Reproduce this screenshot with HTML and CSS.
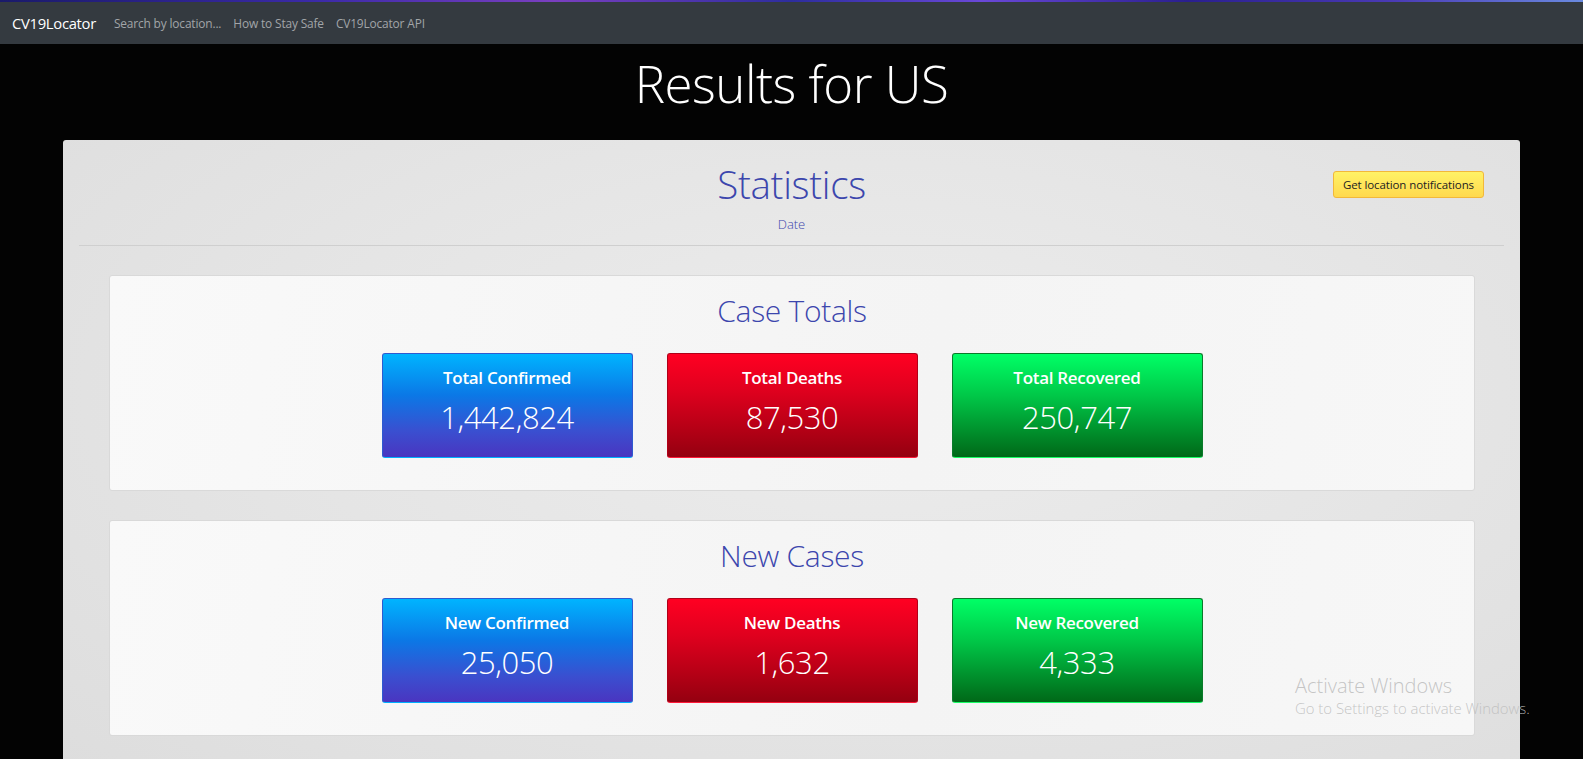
FILE: index.html
```html
<!DOCTYPE html>
<html lang="en">
<head>
<meta charset="utf-8">
<title>CV19Locator - Results for US</title>
<link rel="stylesheet" href="styles.css">
</head>
<body>
<div class="top-strip"></div>
<nav class="navbar">
  <a class="brand" href="#">CV19Locator</a>
  <a class="nav-link" href="#">Search by location...</a>
  <a class="nav-link" href="#">How to Stay Safe</a>
  <a class="nav-link" href="#">CV19Locator API</a>
</nav>
<h1 class="page-title">Results for US</h1>
<main class="stats-card">
  <header class="stats-header">
    <div></div>
    <div class="stats-heading">
      <h2 class="stats-title">Statistics</h2>
      <div class="stats-date">Date</div>
    </div>
    <div class="btn-wrap"><button class="btn-notify">Get location notifications</button></div>
  </header>
  <hr class="divider">
  <div class="stats-body">
    <section class="group">
      <h3 class="group-title">Case Totals</h3>
      <div class="tiles">
        <div class="tile tile-blue"><div class="tile-label">Total Confirmed</div><div class="tile-value">1,442,824</div></div>
        <div class="tile tile-red"><div class="tile-label">Total Deaths</div><div class="tile-value">87,530</div></div>
        <div class="tile tile-green"><div class="tile-label">Total Recovered</div><div class="tile-value">250,747</div></div>
      </div>
    </section>
    <section class="group">
      <h3 class="group-title">New Cases</h3>
      <div class="tiles">
        <div class="tile tile-blue"><div class="tile-label">New Confirmed</div><div class="tile-value">25,050</div></div>
        <div class="tile tile-red"><div class="tile-label">New Deaths</div><div class="tile-value">1,632</div></div>
        <div class="tile tile-green"><div class="tile-label">New Recovered</div><div class="tile-value">4,333</div></div>
      </div>
    </section>
  </div>
</main>
<div class="watermark">
  <div class="wm-title">Activate Windows</div>
  <div class="wm-sub">Go to Settings to activate Windows.</div>
</div>
</body>
</html>
```
FILE: styles.css
```css
html, body {
  margin: 0;
  padding: 0;
}
body {
  background: #030303;
  font-family: "Open Sans", "Noto Sans", sans-serif;
  color: #fff;
}
.top-strip {
  height: 2px;
  background: linear-gradient(90deg, #1a1a6a 0%, #3b2aa8 20%, #7a3fc0 35%, #2d2d9e 50%, #6a48d8 62%, #2a1f8f 75%, #4a3ab5 88%, #6a8ae0 100%);
}
.navbar {
  height: 42px;
  background: #343a40;
  display: flex;
  align-items: center;
  padding: 0 12px;
  gap: 12px;
}
.brand {
  color: #fff;
  text-decoration: none;
  font-size: 14.8px;
  margin-right: 6px;
  letter-spacing: -0.3px;
}
.nav-link {
  color: #a2a5a8;
  text-decoration: none;
  font-size: 11.9px;
  letter-spacing: -0.15px;
}
.page-title {
  margin: 8px 0 25px;
  text-align: center;
  font-weight: 300;
  font-size: 51px;
  line-height: 63px;
  letter-spacing: -0.5px;
  color: #fff;
}
.stats-card {
  margin: 0 63px;
  background: radial-gradient(ellipse at 55% 40%, #ececec 0%, #e5e5e5 50%, #dddddd 100%);
  border-radius: 3px 3px 0 0;
  padding-bottom: 40px;
}
.stats-header {
  display: grid;
  grid-template-columns: 1fr auto 1fr;
  padding: 21px 36px 0;
}
.stats-heading {
  text-align: center;
}
.stats-title {
  margin: 0;
  font-weight: 300;
  font-size: 38.5px;
  line-height: 46px;
  color: #3c46ad;
  letter-spacing: -0.3px;
}
.stats-date {
  margin-top: 7px;
  font-size: 13px;
  line-height: 20px;
  font-weight: 300;
  color: #3c46ad;
}
.btn-wrap {
  justify-self: end;
  padding-top: 10px;
}
.btn-notify {
  font-family: "Open Sans", "Noto Sans", sans-serif;
  font-size: 11.5px;
  color: #222;
  background: linear-gradient(180deg, #fff266 0%, #ffd94e 100%);
  border: 1px solid #f2b83a;
  border-radius: 3px;
  height: 27px;
  padding: 0 9px;
  letter-spacing: -0.1px;
}
.divider {
  margin: 11px 16px 0;
  border: 0;
  border-top: 1px solid #cfcfcf;
}
.stats-body {
  padding: 29px 45px 0 46px;
  display: flex;
  flex-direction: column;
  gap: 29px;
}
.group {
  background: linear-gradient(100deg, #f9f9f9 0%, #f4f4f4 60%, #f7f7f7 100%);
  border: 1px solid #d9d9d9;
  border-radius: 3px;
  padding: 16px 0 32px;
}
.group-title {
  margin: 0 0 23px;
  text-align: center;
  font-weight: 300;
  font-size: 30px;
  line-height: 38px;
  color: #3c46ad;
  letter-spacing: -0.3px;
}
.tiles {
  display: flex;
  justify-content: center;
  gap: 34px;
}
.tile {
  width: 251px;
  height: 105px;
  box-sizing: border-box;
  border-radius: 3px;
  display: flex;
  flex-direction: column;
  align-items: center;
  padding-top: 12px;
  color: #fff;
}
.tile-blue {
  background: linear-gradient(180deg, #00b4ff 0%, #0b78e6 40%, #3a4fd0 75%, #4a35c0 100%);
  border: 1px solid #2e5ad0;
  border-bottom-color: #00b0ff;
}
.tile-red {
  background: linear-gradient(180deg, #ff0022 0%, #e0001e 35%, #b80016 70%, #940010 100%);
  border: 1px solid #b00018;
  border-bottom-color: #ff1a3a;
}
.tile-green {
  background: linear-gradient(180deg, #00ff66 0%, #00c848 40%, #00902c 75%, #006818 100%);
  border: 1px solid #0a7a2a;
  border-bottom-color: #1aff66;
}
.tile-label {
  font-weight: 600;
  font-size: 17px;
  line-height: 24px;
  letter-spacing: -0.3px;
}
.tile-value {
  margin-top: 7px;
  font-weight: 300;
  font-size: 31px;
  line-height: 40px;
  letter-spacing: -0.4px;
}
.watermark {
  position: absolute;
  left: 1295px;
  top: 674px;
  color: rgba(190, 190, 190, 0.9);
  font-weight: 300;
  pointer-events: none;
}
.wm-title {
  font-size: 20px;
  line-height: 24px;
}
.wm-sub {
  font-size: 14.9px;
  line-height: 21px;
}
```
